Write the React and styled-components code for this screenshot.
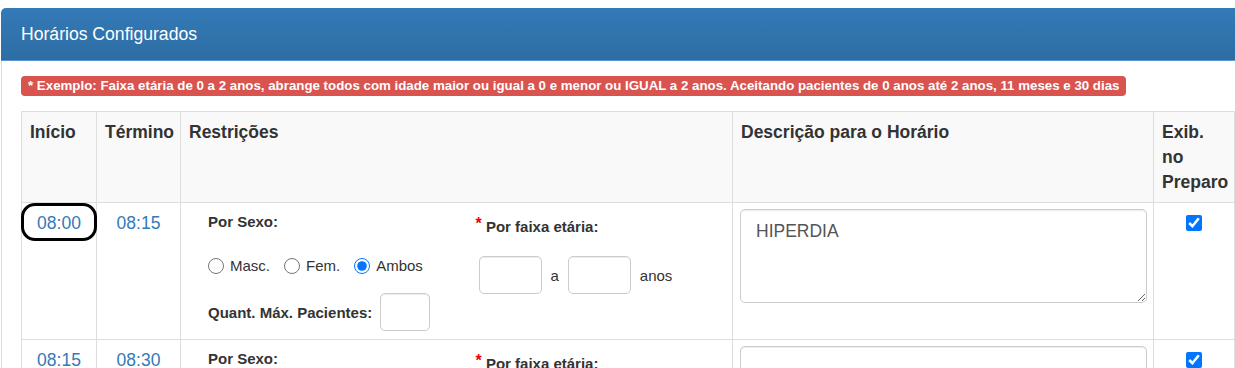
import React from 'react';
import styled, { createGlobalStyle } from 'styled-components';

const GlobalStyle = createGlobalStyle`
    body {
        margin: 0;
        background: #fff;
        color: #333;
        font-family: "Liberation Sans", Arial, Helvetica, sans-serif;
        overflow: hidden;
    }
`

const rows = [
    { start: '08:00', end: '08:15', desc: 'HIPERDIA', marked: true },
    { start: '08:15', end: '08:30', desc: '', marked: false },
];

const App = () => {
  return (
    <Page>
        <GlobalStyle />
        <Panel>
            <PanelHeading>Horários Configurados</PanelHeading>
            <PanelBody>
                <Warning>* Exemplo: Faixa etária de 0 a 2 anos, abrange todos com idade maior ou igual a 0 e menor ou IGUAL a 2 anos. Aceitando pacientes de 0 anos até 2 anos, 11 meses e 30 dias</Warning>

                <Table>
                    <colgroup>
                        <col style={{width: 75}} />
                        <col style={{width: 84}} />
                        <col style={{width: 552}} />
                        <col style={{width: 421}} />
                        <col style={{width: 81}} />
                    </colgroup>
                    <thead>
                        <tr>
                            <Th>Início</Th>
                            <Th>Término</Th>
                            <Th>Restrições</Th>
                            <Th>Descrição para o Horário</Th>
                            <Th>Exib.<br />no<br />Preparo</Th>
                        </tr>
                    </thead>
                    <tbody>
                        {rows.map((row, i) => (
                            <tr key={i}>
                                <TimeCell>
                                    {row.marked && <Annotation />}
                                    {row.start}
                                </TimeCell>
                                <TimeCell>{row.end}</TimeCell>
                                <Td>
                                    <Restrictions>
                                        <Group>
                                            <FieldLabel>Por Sexo:</FieldLabel>
                                            <RadioLine>
                                                <RadioOption><input type="radio" name={`sexo${i}`} />Masc.</RadioOption>
                                                <RadioOption><input type="radio" name={`sexo${i}`} />Fem.</RadioOption>
                                                <RadioOption><input type="radio" name={`sexo${i}`} defaultChecked />Ambos</RadioOption>
                                            </RadioLine>
                                            <QuantLine>
                                                <FieldLabel>Quant. Máx. Pacientes:</FieldLabel>
                                                <Input width={50} />
                                            </QuantLine>
                                        </Group>
                                        <Group>
                                            <FieldLabel $top={2}><Required>*</Required> Por faixa etária:</FieldLabel>
                                            <AgeLine>
                                                <Input width={63} />
                                                <span>a</span>
                                                <Input width={63} />
                                                <span>anos</span>
                                            </AgeLine>
                                        </Group>
                                    </Restrictions>
                                </Td>
                                <DescCell>
                                    <TextArea defaultValue={row.desc} />
                                </DescCell>
                                <CheckCell>
                                    <Check type="checkbox" defaultChecked />
                                </CheckCell>
                            </tr>
                        ))}
                    </tbody>
                </Table>
            </PanelBody>
        </Panel>
    </Page>
  )
}

const Page = styled.div`
    padding: 8px 0 0 1px;
`

const Panel = styled.div`
    width: 1254px;
    border: 1px solid #ddd;
    border-top-color: #d8d3cf;
    border-radius: 5px;
    background: #fff;
`

const PanelHeading = styled.div`
    height: 52px;
    margin: -1px -1px 0;
    padding: 0 20px;
    display: flex;
    align-items: center;
    background: linear-gradient(#337ab7, #2e6da4);
    border-bottom: 1px solid #5b95cc;
    border-radius: 5px 5px 0 0;
    color: #fff;
    font-size: 17.6px;
`

const PanelBody = styled.div`
    padding: 15px 19px;
`

const Warning = styled.span`
    display: inline-block;
    height: 20px;
    line-height: 20px;
    padding: 0 7px;
    background: #d9534f;
    border-radius: 4px;
    color: #fff;
    font-size: 13.3px;
    font-weight: 700;
    white-space: nowrap;
`

const Table = styled.table`
    margin-top: 15px;
    width: 1213px;
    table-layout: fixed;
    border-collapse: collapse;
    font-size: 17.5px;
    line-height: 25px;
`

const Th = styled.th`
    padding: 8px 8px 7px;
    text-align: left;
    vertical-align: top;
    font-weight: 700;
    background: #f9f9f9;
    border: 1px solid #ddd;
`

const Td = styled.td`
    padding: 8px;
    vertical-align: top;
    border: 1px solid #ddd;
`

const TimeCell = styled(Td)`
    position: relative;
    text-align: center;
    color: #337ab7;
`

const Annotation = styled.span`
    position: absolute;
    top: 0;
    left: -1px;
    width: 76px;
    height: 38px;
    box-sizing: border-box;
    border: 3px solid #000;
    border-radius: 14px;
`

const Restrictions = styled.div`
    display: grid;
    grid-template-columns: 1fr 1fr;
`

const Group = styled.div`
    padding: 0 19px;
    font-size: 15px;
    line-height: 21px;
`

const FieldLabel = styled.div`
    margin-top: ${p => p.$top || 0}px;
    font-weight: 700;
`

const Required = styled.span`
    color: #e00;
    font-size: 16px;
    vertical-align: 3px;
`

const RadioLine = styled.div`
    margin-top: 23px;
    display: flex;
    align-items: center;
`

const RadioOption = styled.label`
    display: flex;
    align-items: center;
    margin-right: 14px;

    input {
        width: 16px;
        height: 16px;
        margin: 0 6px 0 0;
    }
`

const QuantLine = styled.div`
    margin-top: 17px;
    display: flex;
    align-items: center;
    gap: 8px;
`

const AgeLine = styled.div`
    margin-top: 19px;
    margin-left: 3px;
    display: flex;
    align-items: center;
    gap: 9px;
`

const Input = styled.input`
    width: ${p => p.width}px;
    height: 38px;
    box-sizing: border-box;
    border: 1px solid #ccc;
    border-radius: 5px;
    box-shadow: inset 0 1px 1px rgba(0, 0, 0, .075);
`

const DescCell = styled(Td)`
    padding: 6px 6px 6px 7px;
`

const TextArea = styled.textarea`
    display: block;
    width: 407px;
    height: 94px;
    box-sizing: border-box;
    padding: 9px 15px 7px;
    border: 1px solid #ccc;
    border-radius: 5px;
    box-shadow: inset 0 1px 1px rgba(0, 0, 0, .075);
    color: #555;
    font-family: "Liberation Sans", Arial, sans-serif;
    font-size: 17.5px;
    line-height: 25px;
`

const CheckCell = styled(Td)`
    text-align: center;
`

const Check = styled.input`
    width: 16px;
    height: 16px;
    margin: 4px 0 0;
`

export default App
